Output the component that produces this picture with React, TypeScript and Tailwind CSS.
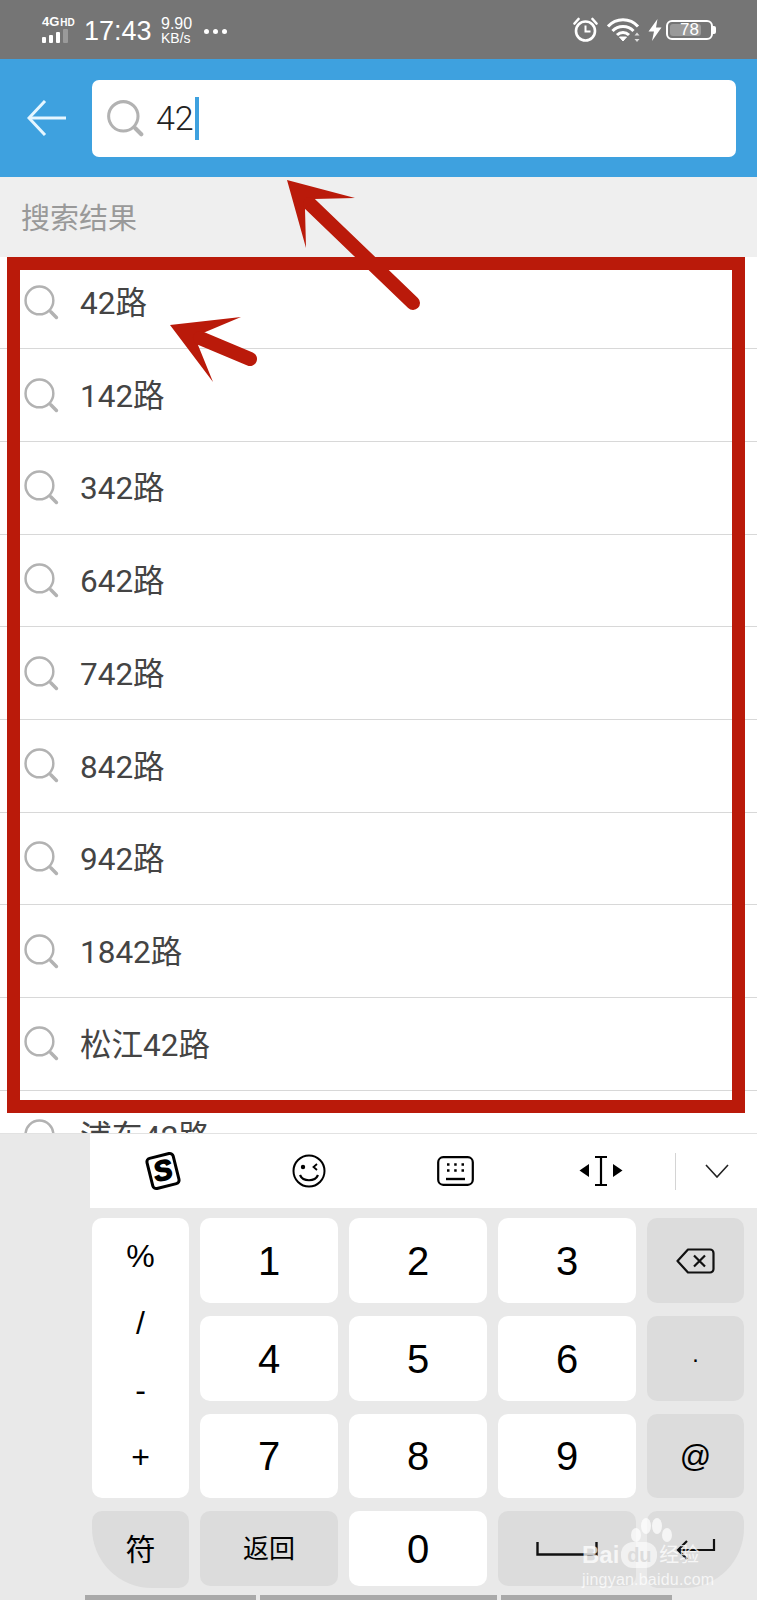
const listItems = ["42路", "142路", "342路", "642路", "742路", "842路", "942路", "1842路", "松江42路", "浦东42路"];

function SearchIcon({ size, width }: { size: number; width: number }) {
  return (
    <svg width={size} height={size} viewBox="0 0 34 34" fill="none" stroke="#b2b2b2" strokeWidth={width} strokeLinecap="round" className="shrink-0">
      <circle cx="15" cy="15" r="13.5" />
      <path d="M26 26l5.5 5.5" strokeWidth={width + 1} />
    </svg>
  );
}

function StatusBar() {
  return (
    <div className="h-[59px] bg-[#757575] flex items-center text-white pl-[42px] pr-[41px] pt-[3px] font-['Liberation_Sans',sans-serif]">
      <div className="w-[32px] flex flex-col mr-[10px] -mt-[3px]">
        <div className="flex items-baseline leading-[10px] font-bold whitespace-nowrap">
          <span className="text-[13px]">4G</span>
          <span className="text-[10px] ml-[1px]">HD</span>
        </div>
        <div className="flex items-end gap-[3px] mt-[1px] h-[14px]">
          <div className="w-[4px] h-[6px] bg-white rounded-[1px]"></div>
          <div className="w-[4px] h-[8px] bg-white rounded-[1px]"></div>
          <div className="w-[4px] h-[11px] bg-white rounded-[1px]"></div>
          <div className="w-[5px] h-[14px] bg-[#9a9a9a] rounded-[1px]"></div>
        </div>
      </div>
      <span className="text-[27px] leading-none w-[78px]">17:43</span>
      <div className="flex flex-col text-[14px] leading-[14px] w-[42px] -ml-[1px] mr-[1px]">
        <span className="text-[16px]">9.90</span>
        <span>KB/s</span>
      </div>
      <div className="flex gap-[4px]">
        <div className="w-[5px] h-[5px] rounded-full bg-white"></div>
        <div className="w-[5px] h-[5px] rounded-full bg-white"></div>
        <div className="w-[5px] h-[5px] rounded-full bg-white"></div>
      </div>
      <div className="ml-auto flex items-center -mt-[3px]">
        {/* alarm */}
        <svg width="25" height="25" viewBox="0 0 25 25" fill="none" stroke="#fff" strokeWidth="2.6">
          <circle cx="12.5" cy="14" r="9.5" />
          <path d="M12.5 8.5V14.5H17.5" strokeWidth="2" />
          <path d="M1.5 6.5L5.5 2M23.5 6.5L19.5 2" strokeLinecap="round" />
        </svg>
        {/* wifi */}
        <svg width="34" height="24" viewBox="0 0 34 24" fill="none" stroke="#fff" strokeWidth="3" className="ml-[9px]">
          <path d="M1 8.5C9 -0.5 23 -0.5 31 8.5" />
          <path d="M5.5 13C11 7 21 7 26.5 13" />
          <path d="M10 17C13.5 13.5 18.5 13.5 22 17" />
          <path d="M12.5 19L16 23L19.5 19Z" fill="#fff" strokeWidth="1" />
          <path d="M30 14.5l-2.5 3h5ZM30 24l-2.5-3h5Z" fill="#ddd" stroke="none" />
        </svg>
        {/* charging */}
        <svg width="14" height="22" viewBox="0 0 14 22" fill="#fff" className="ml-[7px]">
          <path d="M9.5 0L0.5 12.5H6L4 22L13.5 8.5H8Z" />
        </svg>
        {/* battery */}
        <div className="relative ml-[4px] w-[47px] h-[20px] border-2 border-white rounded-[6px] overflow-hidden">
          <div className="absolute left-[2px] top-[2px] bottom-[2px] w-[31px] bg-[#9a9a9a] rounded-[3px]"></div>
          <div className="absolute inset-0 flex items-center justify-center text-[17px] leading-none text-white">78</div>
        </div>
        <div className="w-[3px] h-[8px] bg-white rounded-r-[2px]"></div>
      </div>
    </div>
  );
}

function Header() {
  return (
    <div className="h-[118px] bg-[#3ea1df] flex items-center pl-[27px] pr-[21px]">
      <svg width="39" height="36" viewBox="0 0 39 36" fill="none" stroke="#e6f6ff" strokeWidth="3" className="shrink-0">
        <path d="M18 1L2 18L18 35" />
        <path d="M2 18H39" />
      </svg>
      <div className="ml-[26px] h-[77px] flex-1 bg-white rounded-[7px] flex items-center pl-[15px]">
        <SearchIcon size={37} width={2.8} />
        <span className="ml-[12px] text-[34px] leading-none font-light text-[#222] font-['Roboto','Noto_Sans_CJK_SC',sans-serif]">42</span>
        <div className="ml-[1px] w-[4px] h-[43px] bg-[#3ea1df]"></div>
      </div>
    </div>
  );
}

function ResultList() {
  return (
    <div className="flex-1 overflow-hidden bg-white">
      <div className="h-[79.5px] bg-[#efefef] pl-[21px] pt-[22px] text-[29px] leading-[34px] text-[#999] font-['Noto_Sans_CJK_SC',sans-serif]">
        搜索结果
      </div>
      {listItems.map((item) => (
        <div key={item} className="h-[92.7px] border-b border-[#d8d8d8] flex items-center pl-[24px]">
          <SearchIcon size={35} width={2.4} />
          <span className="ml-[21px] pt-[3px] text-[31.5px] leading-none text-[#444] font-['Roboto','Noto_Sans_CJK_SC',sans-serif]">{item}</span>
        </div>
      ))}
    </div>
  );
}

function Toolbar() {
  return (
    <div className="ml-[90px] h-[74px] bg-white flex items-center">
      <div className="w-[146px] flex justify-center">
        <div className="w-[30px] h-[34px] border-[3px] border-black rounded-[5px] rotate-[-14deg] flex items-center justify-center text-[28px] leading-none font-black italic text-black [-webkit-text-stroke:1.5px_black] font-['Liberation_Sans',sans-serif]">
          S
        </div>
      </div>
      <div className="w-[146px] flex justify-center">
        <svg width="34" height="34" viewBox="0 0 34 34" fill="none" stroke="#000" strokeWidth="2">
          <circle cx="17" cy="17" r="15.5" />
          <circle cx="11" cy="13" r="2.2" fill="#000" stroke="none" />
          <path d="M25 10l-3.5 3 3.5 3" strokeWidth="1.8" />
          <path d="M8 21c3 7 15 7 18 0" strokeWidth="2.2" />
        </svg>
      </div>
      <div className="w-[146px] flex justify-center">
        <svg width="37" height="30" viewBox="0 0 37 30" fill="none" stroke="#000" strokeWidth="2.2">
          <rect x="1.2" y="1.2" width="34.6" height="27.6" rx="5" />
          <path d="M9 23H28" strokeWidth="2.4" />
          <path d="M10 8.5h2.5M17.2 8.5h2.5M24.5 8.5h2.5M10 14.5h2.5M17.2 14.5h2.5M24.5 14.5h2.5" strokeWidth="2.4" />
        </svg>
      </div>
      <div className="w-[146px] flex justify-center">
        <svg width="44" height="30" viewBox="0 0 44 30" fill="#000" stroke="none">
          <path d="M10 8V21L0.5 14.5Z" />
          <path d="M34 8V21L43.5 14.5Z" />
          <path d="M16 1H28M22 1V29M16 29H28" fill="none" stroke="#000" strokeWidth="2.2" />
        </svg>
      </div>
      <div className="w-[1px] h-[37px] bg-[#d4d4d4] ml-[1px]"></div>
      <div className="flex-1 flex justify-center">
        <svg width="24" height="14" viewBox="0 0 24 14" fill="none" stroke="#222" strokeWidth="1.6">
          <path d="M1 1L12 13L23 1" />
        </svg>
      </div>
    </div>
  );
}

function Keyboard() {
  const numberKey = "bg-white rounded-[10px] flex items-center justify-center text-[40px] leading-none text-black";
  const grayKey = "bg-[#dcdcdc] rounded-[10px] flex items-center justify-center text-black";
  return (
    <div className="h-[467px] bg-[#e9e9e9] border-t border-[#e2e2e2] relative font-['Liberation_Sans','Noto_Sans_CJK_SC',sans-serif]">
      <Toolbar />
      <div className="ml-[92px] mr-[14px] mt-[10px] grid grid-cols-[97px_138px_138px_138px_97px] grid-rows-[85px_85px_84px_75px] gap-x-[11px] gap-y-[13px]">
        <div className="row-span-3 bg-white rounded-[10px] flex flex-col items-center text-[32px] leading-none text-black pt-[22px] gap-[35px]">
          <span>%</span>
          <span>/</span>
          <span>-</span>
          <span>+</span>
        </div>
        <div className={numberKey}>1</div>
        <div className={numberKey}>2</div>
        <div className={numberKey}>3</div>
        <div className={grayKey}>
          <svg width="39" height="26" viewBox="0 0 39 26" fill="none" stroke="#111" strokeWidth="2.2">
            <path d="M12 1.5H34a3.5 3.5 0 0 1 3.5 3.5V21a3.5 3.5 0 0 1-3.5 3.5H12L1.5 13Z" strokeLinejoin="round" />
            <path d="M18 7.5L29 18.5M29 7.5L18 18.5" />
          </svg>
        </div>
        <div className={numberKey}>4</div>
        <div className={numberKey}>5</div>
        <div className={numberKey}>6</div>
        <div className={grayKey + " text-[24px] leading-none"}>·</div>
        <div className={numberKey}>7</div>
        <div className={numberKey}>8</div>
        <div className={numberKey}>9</div>
        <div className={grayKey + " text-[31px] leading-none"}>@</div>
        <div className="bg-[#dcdcdc] rounded-[10px] rounded-bl-[60px] h-[77px] flex items-center justify-center text-[30px] leading-none text-black">符</div>
        <div className={grayKey + " text-[26px] leading-none"}>返回</div>
        <div className={numberKey}>0</div>
        <div className={grayKey}>
          <svg width="62" height="14" viewBox="0 0 62 14" fill="none" stroke="#111" strokeWidth="2.4">
            <path d="M1.5 0V12.5H60.5V0" />
          </svg>
        </div>
        <div className="bg-[#dcdcdc] rounded-[10px] rounded-br-[60px] h-[77px] flex items-center justify-center">
          <svg width="40" height="24" viewBox="0 0 40 24" fill="none" stroke="#111" strokeWidth="2.2">
            <path d="M11 3L2 12L11 21M2 12H38V1" />
          </svg>
        </div>
      </div>
      <div className="absolute left-[85px] bottom-0 flex gap-[4px] h-[5px]">
        <div className="w-[171px] bg-[#a9a9a9]"></div>
        <div className="w-[237px] bg-[#a9a9a9]"></div>
        <div className="w-[171px] bg-[#a9a9a9]"></div>
      </div>
    </div>
  );
}

function Annotations() {
  return (
    <>
      <div className="absolute left-[7px] top-[257px] w-[738px] h-[856px] border-[13px] border-[#ba1a0a]"></div>
      <svg width="757" height="1600" viewBox="0 0 757 1600" className="absolute left-0 top-0">
        <path d="M287 180L355 198L314 199L305 209L306 248Z" fill="#ba1a0a" />
        <path d="M310 204L413 303" stroke="#ba1a0a" strokeWidth="14" strokeLinecap="round" />
        <path d="M170 325L241 317L203 333L198 345L213 382Z" fill="#ba1a0a" />
        <path d="M200 338L250 359" stroke="#ba1a0a" strokeWidth="14" strokeLinecap="round" />
      </svg>
    </>
  );
}

function Watermark() {
  return (
    <div className="absolute left-[582px] top-[1518px] w-[136px] text-white/75 font-['Liberation_Sans','Noto_Sans_CJK_SC',sans-serif]">
      <svg width="46" height="32" viewBox="0 0 46 32" fill="#fff" fillOpacity="0.7" className="absolute left-[46px] top-0">
        <ellipse cx="8" cy="17" rx="5" ry="7" />
        <ellipse cx="18" cy="8" rx="5" ry="8" />
        <ellipse cx="29" cy="8" rx="5" ry="8" />
        <ellipse cx="39" cy="17" rx="5" ry="7" />
      </svg>
      <div className="pt-[24px] flex items-center text-[24px] leading-[26px] font-bold">
        <span>Bai</span>
        <span className="ml-[2px] w-[36px] h-[26px] rounded-[12px] bg-white/60 text-[#dcdcdc] flex items-center justify-center text-[20px]">du</span>
        <span className="ml-[2px] text-[20px] font-normal whitespace-nowrap">经验</span>
      </div>
      <div className="text-[16px] leading-[18px] mt-[3px] tracking-[0.2px] whitespace-nowrap">jingyan.baidu.com</div>
    </div>
  );
}

export default function App() {
  return (
    <div className="relative w-[757px] h-[1600px] overflow-hidden flex flex-col bg-white">
      <StatusBar />
      <Header />
      <ResultList />
      <Keyboard />
      <Annotations />
      <Watermark />
    </div>
  );
}
